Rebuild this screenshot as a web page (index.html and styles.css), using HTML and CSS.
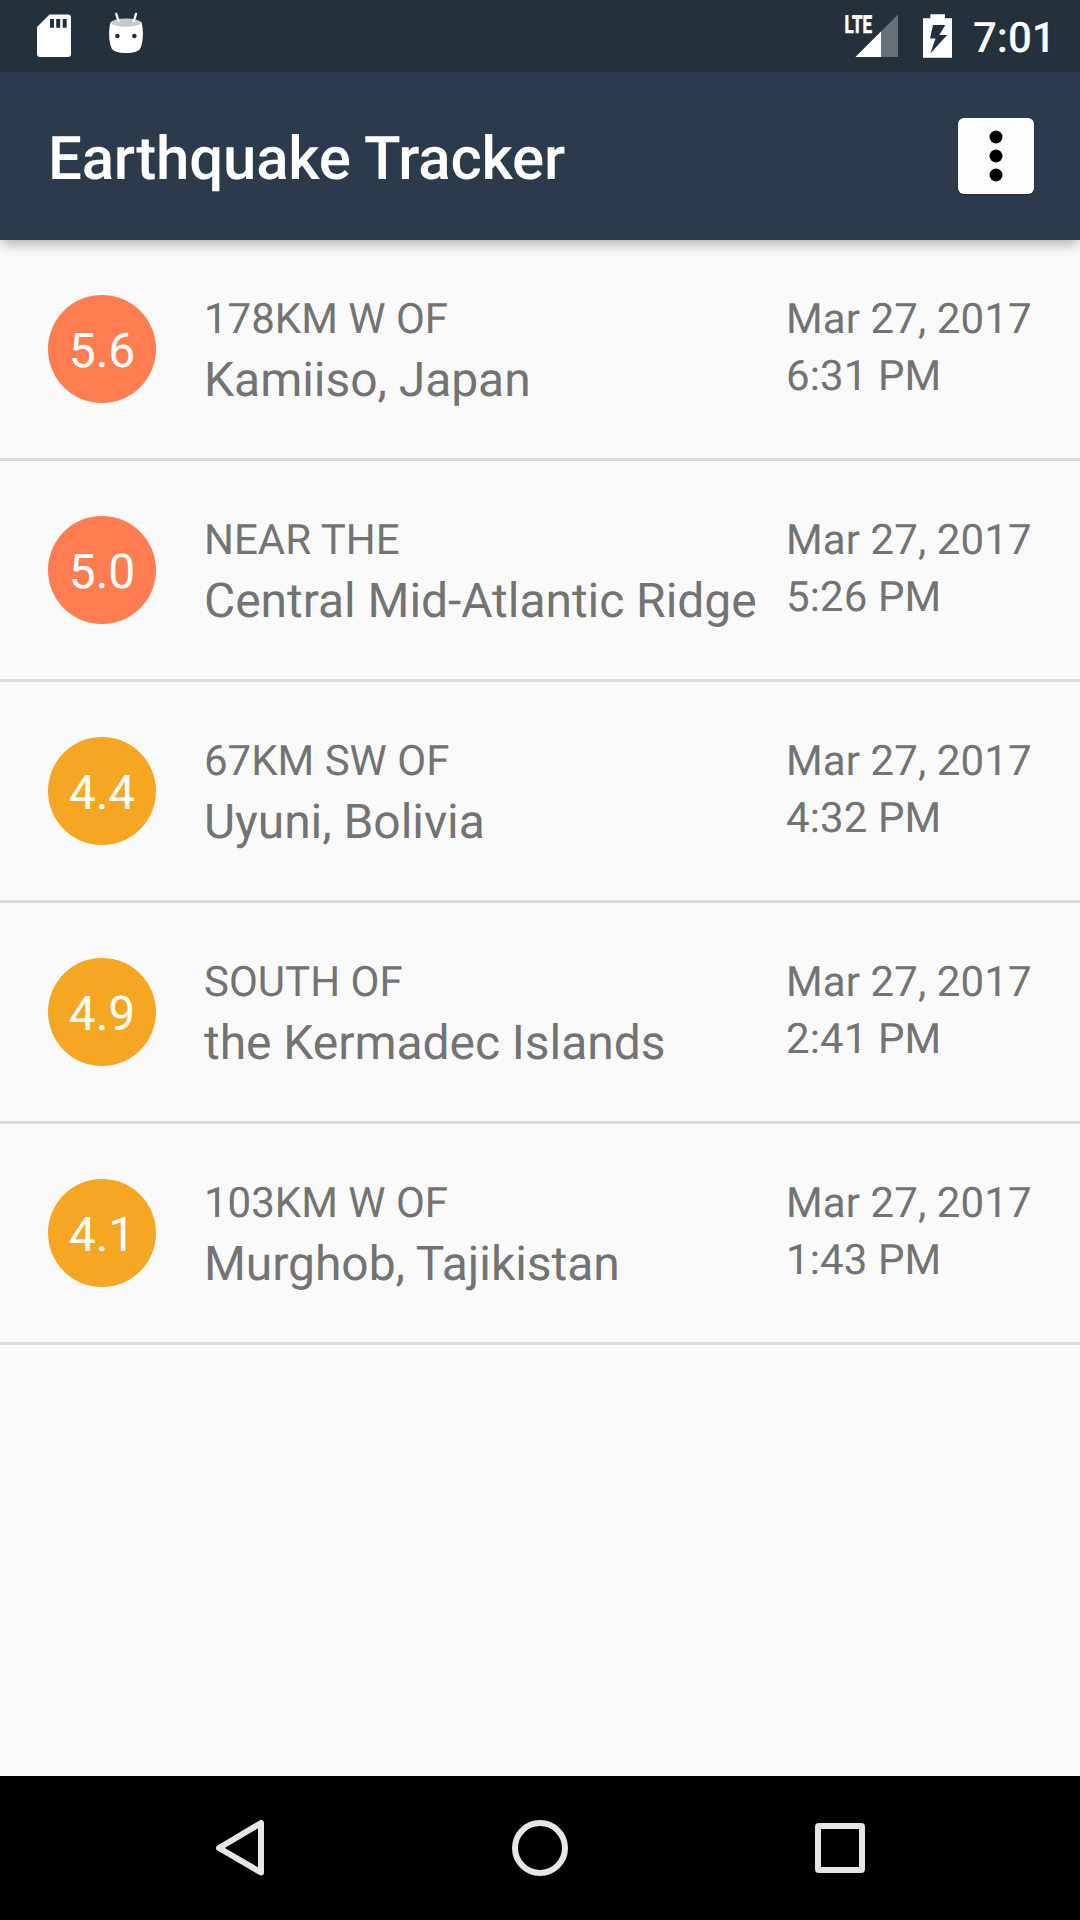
FILE: index.html
```html
<!DOCTYPE html>
<html lang="en">
<head>
<meta charset="utf-8">
<title>Earthquake Tracker</title>
<link rel="stylesheet" href="styles.css">
</head>
<body>
<div class="screen">
  <div class="status-bar">
    <svg class="notifications" width="120" height="72" viewBox="30 0 120 72">
      <path fill="#fff" fill-rule="evenodd" d="M49.500 14.600H68a3 3 0 0 1 3 3V54a3 3 0 0 1-3 3H40a3 3 0 0 1-3-3V27ZM50 19v8.700h4V19ZM56.200 19v8.700h4V19ZM62.700 19v8.700h4V19Z"/>
      <path fill="#fff" d="M110.500 22C108.500 30 108.500 41 111.500 48C113 51.500 118 53 126 53S139 51.500 140.500 48C143.500 41 143.500 30 141.500 22Z"/>
      <ellipse cx="126" cy="22.700" rx="15" ry="4.100" fill="#c8cacc"/>
      <path d="M116.300 14l2.200 7M136 14l-2.200 7" stroke="#fff" stroke-width="2.400" stroke-linecap="round"/>
      <circle cx="117.400" cy="36" r="2.300" fill="#24313d"/>
      <circle cx="134.400" cy="36" r="2.300" fill="#24313d"/>
    </svg>
    <div class="system">
      <svg width="60" height="72" viewBox="842 0 60 72">
        <text class="lte" x="844.600" y="33.300" textLength="27.500" lengthAdjust="spacingAndGlyphs">LTE</text>
        <path fill="#667079" d="M898 14.500V57H855.500Z"/>
        <path fill="#fff" d="M881 31.500V57H855.500Z"/>
      </svg>
      <svg width="30" height="72" viewBox="923 0 30 72">
        <path fill="#fff" fill-rule="evenodd" d="M930.300 14.300H945V18.300H952V57.700H923V18.300H930.300ZM933 25L930 38.600H935.500L930.300 53.500L947.200 35H939.300L945.300 25Z"/>
      </svg>
      <span class="clock">7:01</span>
    </div>
  </div>
  <header class="app-bar">
    <h1 class="app-title">Earthquake Tracker</h1>
    <button class="menu" aria-label="More options">
      <svg width="76" height="76" viewBox="0 0 76 76"><circle cx="38" cy="19" r="6.500"/><circle cx="38" cy="38" r="6.500"/><circle cx="38" cy="57" r="6.500"/></svg>
    </button>
  </header>
  <main class="quakes">
    <article class="quake">
      <span class="magnitude strong">5.6</span>
      <div class="place"><p class="offset">178KM W OF</p><p class="location">Kamiiso, Japan</p></div>
      <div class="when"><p>Mar 27, 2017</p><p>6:31 PM</p></div>
    </article>
    <article class="quake">
      <span class="magnitude strong">5.0</span>
      <div class="place"><p class="offset">NEAR THE</p><p class="location">Central Mid-Atlantic Ridge</p></div>
      <div class="when"><p>Mar 27, 2017</p><p>5:26 PM</p></div>
    </article>
    <article class="quake">
      <span class="magnitude">4.4</span>
      <div class="place"><p class="offset">67KM SW OF</p><p class="location">Uyuni, Bolivia</p></div>
      <div class="when"><p>Mar 27, 2017</p><p>4:32 PM</p></div>
    </article>
    <article class="quake">
      <span class="magnitude">4.9</span>
      <div class="place"><p class="offset">SOUTH OF</p><p class="location">the Kermadec Islands</p></div>
      <div class="when"><p>Mar 27, 2017</p><p>2:41 PM</p></div>
    </article>
    <article class="quake">
      <span class="magnitude">4.1</span>
      <div class="place"><p class="offset">103KM W OF</p><p class="location">Murghob, Tajikistan</p></div>
      <div class="when"><p>Mar 27, 2017</p><p>1:43 PM</p></div>
    </article>
  </main>
  <nav class="nav-bar">
    <svg width="80" height="80" viewBox="200 1808 80 80"><path d="M261 1823V1872.500L219 1848Z"/></svg>
    <svg width="80" height="80" viewBox="500 1808 80 80"><circle cx="540" cy="1848" r="25"/></svg>
    <svg width="80" height="80" viewBox="800 1808 80 80"><rect x="818" y="1826" width="44" height="44" rx="1"/></svg>
  </nav>
</div>
</body>
</html>
```
FILE: styles.css
```css
* { box-sizing: border-box; }
body, h1, p { margin: 0; }
body { font-family: Roboto, sans-serif; background: #fafafa; text-rendering: geometricPrecision; }
.screen { width: 1080px; height: 1920px; display: flex; flex-direction: column; overflow: hidden; }
.status-bar { height: 72px; background: #24313d; display: flex; justify-content: space-between; padding: 0 28px 0 30px; flex: none; z-index: 2; }
.system { display: flex; }
.system svg:nth-child(2) { margin-left: 21px; }
.lte { font: 700 24.500px Roboto, sans-serif; fill: #fff; stroke: #fff; stroke-width: .6px; }
.clock { width: 79px; margin-left: 20px; font-size: 42px; font-weight: 500; line-height: 78px; height: 72px; color: #fff; white-space: nowrap; }
.app-bar { height: 168px; flex: none; background: #2c3b4b; display: flex; justify-content: space-between; align-items: center; padding: 0 46px 0 48px; box-shadow: 0 6px 12px -2px rgba(0, 0, 0, .3); z-index: 1; }
.app-title { font-size: 60px; font-weight: 500; line-height: 70px; padding-top: 6px; letter-spacing: -.2px; color: #fff; }
.menu { width: 76px; height: 76px; border: 0; border-radius: 6px; background: #fdfdfd; padding: 0; box-shadow: 0 1px 2px rgba(0, 0, 0, .3); }
.menu svg { display: block; }
.quakes { flex: 1; }
.quake { height: 221px; border-bottom: 3px solid #dadbdb; padding: 0 48px; display: flex; align-items: center; color: #737373; }
.magnitude { width: 108px; height: 108px; border-radius: 50%; background: #f5a623; color: #fff; font-size: 48px; line-height: 112px; text-align: center; flex: none; }
.strong { background: #ff7d50; }
.place { flex: 1; margin-left: 48px; white-space: nowrap; height: 108px; }
.offset { font-size: 42px; line-height: 50px; }
.location { font-size: 48px; line-height: 70px; letter-spacing: -.05px; }
.when { width: 246px; height: 108px; font-size: 42px; line-height: 57px; letter-spacing: .1px; white-space: nowrap; margin-top: -8px; }
.nav-bar { height: 144px; flex: none; background: #000; display: flex; align-items: center; justify-content: center; gap: 220px; }
.nav-bar svg { fill: none; stroke: #e6e6e6; stroke-width: 6; stroke-linejoin: round; }
```
